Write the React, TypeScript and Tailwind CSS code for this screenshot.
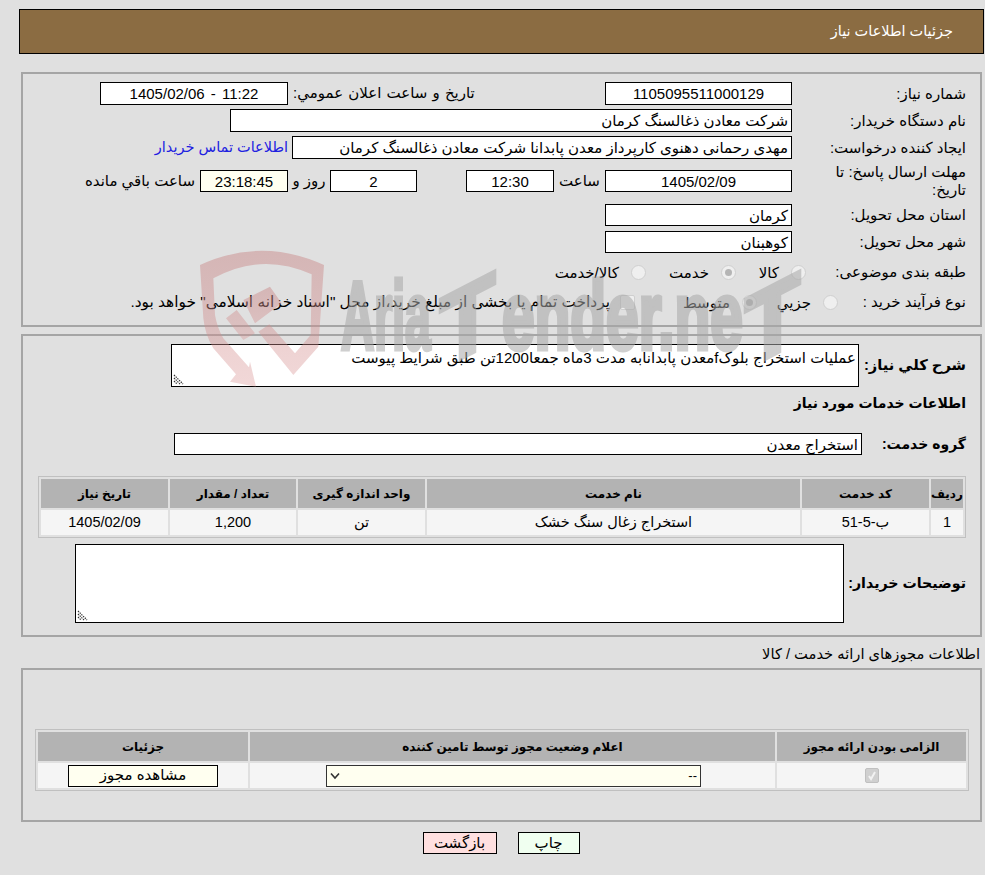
const font = "font-['Liberation_Sans','DejaVu_Sans',sans-serif]";

function Box({ w, children, center, bg = "bg-white", h = "h-[23px]" }: { w: string; children?: React.ReactNode; center?: boolean; bg?: string; h?: string }) {
  return (
    <div className={`${w} ${h} ${bg} border border-black shrink-0 flex items-center px-[3px] text-[15px] leading-none whitespace-nowrap ${center ? "justify-center" : ""}`}>
      {children}
    </div>
  );
}

function Label({ children, narrow }: { children: React.ReactNode; narrow?: boolean }) {
  return <div className={`${narrow ? "w-[174px]" : "w-[188px]"} shrink-0 pr-[14px] text-[15px] leading-[18px] text-black`}>{children}</div>;
}

function Radio({ checked }: { checked?: boolean }) {
  return (
    <span className="w-[15px] h-[15px] rounded-full border border-[#cfcfcf] bg-[#efefef] flex items-center justify-center shrink-0 -mt-[3px]">
      {checked && <span className="w-[7px] h-[7px] rounded-full bg-[#b5b5b5]" />}
    </span>
  );
}

function Grip() {
  return (
    <svg className="absolute left-[1px] bottom-[1px]" width="11" height="11" viewBox="0 0 11 11">
      <path d="M1 1l9 9M1 4l6 6M1 7l3 3" stroke="#333" strokeWidth="1.2" strokeDasharray="1.4 1" fill="none" />
    </svg>
  );
}

const th = "bg-[#b3b3b3] font-bold text-[12px] text-black text-center align-middle h-[29px]";
const td = "bg-[#f5f5f5] text-[14.5px] text-black text-center align-middle h-[25px]";

export default function App() {
  return (
    <div dir="rtl" className={`${font} relative bg-[#e0e0e0] w-[985px] h-[875px] overflow-hidden text-black`}>
      <div className="pt-[9px] pr-[1px] pl-[19px]">
        <div className="h-[45px] bg-[#8b6c42] border border-black flex items-center pr-[30px] text-white text-[14.5px]">
          جزئیات اطلاعات نیاز
        </div>
      </div>

      <div className="mt-[18px] mr-[3px] ml-[21px] h-[255px] border-2 border-[#a5a5a5] pt-[8px] relative">
        <div className="flex items-center h-[23px]">
          <Label>شماره نیاز:</Label>
          <Box w="w-[187px]" center>1105095511000129</Box>
          <div className="w-[317px] shrink-0 flex justify-end pl-[5px] text-[15px]">
            <span className="[word-spacing:1px]">تاریخ و ساعت اعلان عمومي:</span>
          </div>
          <Box w="w-[188px]" center><span dir="ltr" className="[word-spacing:2px]">1405/02/06 - 11:22</span></Box>
        </div>
        <div className="flex items-center h-[23px] mt-[4px]">
          <Label>نام دستگاه خریدار:</Label>
          <Box w="w-[562px]">شرکت معادن ذغالسنگ کرمان</Box>
        </div>
        <div className="flex items-center h-[23px] mt-[4px]">
          <Label>ایجاد کننده درخواست:</Label>
          <Box w="w-[500px]">مهدی رحمانی دهنوی کارپرداز معدن پابدانا شرکت معادن ذغالسنگ کرمان</Box>
          <span className="pr-[4px] text-[14.5px] text-[#2020e0]">اطلاعات تماس خریدار</span>
        </div>
        <div className="flex items-center h-[36px] mt-[4px]">
          <Label>مهلت ارسال پاسخ: تا<br />تاریخ:</Label>
          <Box w="w-[187px]" h="h-[22px]" center>1405/02/09</Box>
          <span className="w-[51px] text-center text-[15px]">ساعت</span>
          <Box w="w-[88px]" h="h-[22px]" center>12:30</Box>
          <span className="w-[49px]" />
          <Box w="w-[87px]" h="h-[22px]" center>2</Box>
          <span className="w-[42px] text-center text-[15px]">روز و</span>
          <Box w="w-[88px]" h="h-[22px]" center bg="bg-[#fffff0]">23:18:45</Box>
          <span className="pr-[5px] text-[15px]">ساعت باقي مانده</span>
        </div>
        <div className="flex items-center h-[22px] mt-[5px]">
          <Label>استان محل تحویل:</Label>
          <Box w="w-[187px]" h="h-[22px]">کرمان</Box>
        </div>
        <div className="flex items-center h-[22px] mt-[5px]">
          <Label>شهر محل تحویل:</Label>
          <Box w="w-[187px]" h="h-[22px]">کوهبنان</Box>
        </div>
        <div className="flex items-center h-[22px] mt-[8px] text-[15px]">
          <Label narrow>طبقه بندی موضوعی:</Label>
          <div className="flex items-center">
            <div className="flex items-center gap-[12px] w-[70px] pt-[3px]"><Radio /><span>کالا</span></div>
            <div className="flex items-center gap-[12px] w-[90px] pt-[3px]"><Radio checked /><span>خدمت</span></div>
            <div className="flex items-center gap-[12px] pt-[3px]"><Radio /><span>کالا/خدمت</span></div>
          </div>
        </div>
        <div className="flex items-center h-[22px] mt-[8px] text-[15px]">
          <div className="w-[142px] shrink-0 pr-[14px] leading-[18px]">نوع فرآیند خرید :</div>
          <div className="flex items-center">
            <div className="flex items-center gap-[12px] w-[81px] pt-[3px]"><Radio /><span>جزیي</span></div>
            <div className="flex items-center gap-[12px] w-[122px] pt-[3px]"><Radio checked /><span>متوسط</span></div>
            <span className="w-[15px] h-[15px] rounded-[2px] border border-[#cfcfcf] bg-[#efefef] shrink-0 ml-[10px]" />
            <span className="whitespace-nowrap text-[15.4px]">پرداخت تمام یا بخشی از مبلغ خرید،از محل "اسناد خزانه اسلامی" خواهد بود.</span>
          </div>
        </div>
      </div>

      <div className="mt-[7px] mr-[3px] ml-[21px] h-[303px] border-2 border-[#a5a5a5] pt-[8px] relative">
        <div className="flex items-center h-[43px]">
          <div className="w-[121px] shrink-0 pr-[14px] text-[14.7px] font-bold whitespace-nowrap">شرح کلي نیاز:</div>
          <div className="relative w-[688px] h-[43px] bg-white border border-black px-[2px] pt-[5px] text-[15px] leading-[16px] whitespace-nowrap shrink-0">
            عملیات استخراج بلوکfمعدن پابدانابه مدت 3ماه جمعا1200تن طبق شرایط پیوست
            <Grip />
          </div>
        </div>
        <div className="pr-[14px] mt-[7px] h-[18px] text-[14px] font-bold leading-[18px]">اطلاعات خدمات مورد نیاز</div>
        <div className="flex items-center h-[22px] mt-[21px]">
          <div className="w-[118px] shrink-0 pr-[14px] text-[14px] font-bold">گروه خدمت:</div>
          <Box w="w-[688px]" h="h-[22px]">استخراج معدن</Box>
        </div>
        <div className="mt-[21px] mr-[14px] ml-[15px]">
          <table className="w-[928px] border border-[#c0c0c0] border-separate border-spacing-[2px] table-fixed">
            <colgroup>
              <col className="w-[32px]" /><col className="w-[127px]" /><col className="w-[373px]" /><col className="w-[127px]" /><col className="w-[126px]" /><col />
            </colgroup>
            <thead>
              <tr>
                <th className={th}>ردیف</th><th className={th}>کد خدمت</th><th className={th}>نام خدمت</th><th className={th}>واحد اندازه گیری</th><th className={th}>تعداد / مقدار</th><th className={th}>تاریخ نیاز</th>
              </tr>
            </thead>
            <tbody>
              <tr>
                <td className={td}>1</td><td className={td}>ب-5-51</td><td className={td}>استخراج زغال سنگ خشک</td><td className={td}>تن</td><td className={td}>1,200</td><td className={td}>1405/02/09</td>
              </tr>
            </tbody>
          </table>
        </div>
        <div className="flex items-center mt-[6px]">
          <div className="w-[136px] shrink-0 pr-[14px] text-[14.2px] font-bold whitespace-nowrap">توضیحات خریدار:</div>
          <div className="relative w-[769px] h-[79px] bg-white border border-black shrink-0"><Grip /></div>
        </div>
      </div>

      <div className="mt-[8px] pr-[5px] h-[20px] text-[14.7px] leading-[18px]">اطلاعات مجوزهای ارائه خدمت / کالا</div>

      <div className="mt-[3px] mr-[3px] ml-[21px] h-[154px] border-2 border-[#a5a5a5] pt-[59px] pr-[11px]">
        <table className="w-[934px] border border-[#c0c0c0] border-separate border-spacing-[2px] table-fixed">
          <colgroup>
            <col className="w-[189px]" /><col className="w-[525px]" /><col />
          </colgroup>
          <thead>
            <tr>
              <th className={th}>الزامی بودن ارائه مجوز</th><th className={th}>اعلام وضعیت مجوز توسط تامین کننده</th><th className={th}>جزئیات</th>
            </tr>
          </thead>
          <tbody>
            <tr>
              <td className={td}>
                <span className="inline-flex w-[14px] h-[15px] bg-[#d0d0d0] border border-[#c0c0c0] rounded-[2px] items-center justify-center align-middle">
                  <svg width="10" height="11" viewBox="0 0 10 11"><path d="M2 6l2 3 4-7" stroke="#f2f2f2" strokeWidth="2" fill="none" /></svg>
                </span>
              </td>
              <td className={td}>
                <div className="w-[375px] h-[22px] mr-[74px] bg-[#fffff0] border border-[#333] flex items-center justify-between px-[3px] text-[13px]">
                  <span>--</span>
                  <svg width="10" height="8" viewBox="0 0 10 8"><path d="M1 1.5l4 4.5 4-4.5" stroke="#333" strokeWidth="1.6" fill="none" /></svg>
                </div>
              </td>
              <td className={td}>
                <div className="w-[150px] h-[22px] mr-[30px] bg-[#fffff0] border border-black flex items-center justify-center text-[15px]">مشاهده مجوز</div>
              </td>
            </tr>
          </tbody>
        </table>
      </div>

      <div className="mt-[10px] flex justify-center gap-[21px] pl-[17px]" dir="ltr">
        <div className="w-[74px] h-[22px] bg-[#ffe0e0] border border-black flex items-center justify-center text-[15px]">بازگشت</div>
        <div className="w-[62px] h-[22px] bg-[#f0fff0] border border-black flex items-center justify-center text-[15px]">چاپ</div>
      </div>

      <div className="absolute left-[180px] top-[235px] pointer-events-none" dir="ltr">
        <svg width="160" height="160" viewBox="0 0 480 480">
          <defs>
            <linearGradient id="shield" x1="0" y1="0" x2="0" y2="1">
              <stop offset="0" stopColor="#c98b8b" stopOpacity="0.5" />
              <stop offset="1" stopColor="#d88f8f" stopOpacity="0.35" />
            </linearGradient>
          </defs>
          <path fill="url(#shield)" d="M60 90 Q245 5 432 90 L415 335 L340 420 L235 290 L268 268 L345 355 L392 300 L395 118 Q245 50 100 130 L105 240 Q112 280 130 310 L207 397 L210 380 L228 455 L150 440 L168 418 L100 340 Q75 300 70 250Z" />
          <path fill="url(#shield)" d="M138 250 L170 225 L225 295 L190 315Z M190 195 L270 155 L305 205 L225 265Z" />
        </svg>
      </div>
      <div className="absolute left-[338px] top-[266px] w-[470px] h-[100px] pointer-events-none opacity-55 font-bold text-[#a8a8a8] text-[96px] leading-[100px] [-webkit-text-stroke:5px_#a8a8a8]" dir="ltr">
        <span className="absolute left-[3px] top-0 origin-top-left scale-x-[0.48] whitespace-nowrap">Aria</span>
        <span className="absolute left-[102px] top-[18px] origin-top-left -skew-y-[25deg] scale-x-[0.9] text-[100px] whitespace-nowrap">T</span>
        <span className="absolute left-[164px] top-0 origin-top-left scale-x-[0.61] whitespace-nowrap">ender.ne</span>
        <span className="absolute left-[407px] top-[18px] origin-top-left -skew-y-[25deg] scale-x-[0.9] text-[100px] whitespace-nowrap">T</span>
      </div>
    </div>
  );
}
